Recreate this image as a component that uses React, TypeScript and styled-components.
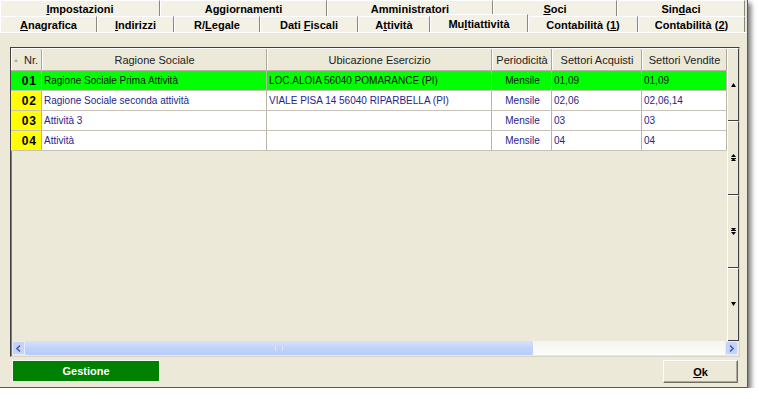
import React from 'react';
import styled, { createGlobalStyle } from 'styled-components';

const GlobalStyle = createGlobalStyle`
    html, body {
        margin: 0;
        padding: 0;
        background: #ffffff;
    }
    body {
        font-family: "Liberation Sans", Arial, sans-serif;
        font-size: 11px;
    }
`;

type Tab = { label: string; key?: number; width: number; active?: boolean };

const topTabs: Tab[] = [
    { label: 'Impostazioni', key: 0, width: 160 },
    { label: 'Aggiornamenti', width: 167 },
    { label: 'Amministratori', key: 11, width: 166 },
    { label: 'Soci', key: 0, width: 124 },
    { label: 'Sindaci', key: 3, width: 128 },
];

const bottomTabs: Tab[] = [
    { label: 'Anagrafica', key: 0, width: 97 },
    { label: 'Indirizzi', key: 0, width: 77 },
    { label: 'R/Legale', key: 2, width: 86 },
    { label: 'Dati Fiscali', key: 5, width: 98 },
    { label: 'Attività', key: 1, width: 72 },
    { label: 'Multiattività', key: 2, width: 98, active: true },
    { label: 'Contabilità (1)', key: 13, width: 110 },
    { label: 'Contabilità (2)', key: 13, width: 107 },
];

type Row = { nr: string; ragione: string; ubicazione: string; periodo: string; acquisti: string; vendite: string };

const rows: Row[] = [
    { nr: '01', ragione: 'Ragione Sociale Prima Attività', ubicazione: 'LOC.ALOIA 56040 POMARANCE (PI)', periodo: 'Mensile', acquisti: '01,09', vendite: '01,09' },
    { nr: '02', ragione: 'Ragione Sociale seconda attività', ubicazione: 'VIALE PISA 14 56040 RIPARBELLA (PI)', periodo: 'Mensile', acquisti: '02,06', vendite: '02,06,14' },
    { nr: '03', ragione: 'Attività 3', ubicazione: '', periodo: 'Mensile', acquisti: '03', vendite: '03' },
    { nr: '04', ragione: 'Attività', ubicazione: '', periodo: 'Mensile', acquisti: '04', vendite: '04' },
];

const columns = '31px 225px 225px 60px 90px 85px';

// label with the underlined access key letter
const Accel = ({ text, at }: { text: string; at?: number }) => {
    if (at === undefined) return <span>{text}</span>;
    return (
        <span>
            {text.slice(0, at)}
            <u>{text[at]}</u>
            {text.slice(at + 1)}
        </span>
    );
};

const Arrow = ({ dir, double }: { dir: 'up' | 'down'; double?: boolean }) => {
    const up = dir === 'up';
    return (
        <svg width="5" height={double ? 7 : 4} viewBox={double ? '0 0 5 7' : '0 0 5 4'}>
            {double ? (
                up ? (
                    <>
                        <polygon points="2.5,0 5,3 0,3" fill="#000" />
                        <rect x="0" y="4" width="5" height="1" fill="#000" />
                        <polygon points="2.5,4 5,7 0,7" fill="#000" />
                    </>
                ) : (
                    <>
                        <polygon points="0,0 5,0 2.5,3" fill="#000" />
                        <rect x="0" y="2" width="5" height="1" fill="#000" />
                        <polygon points="0,4 5,4 2.5,7" fill="#000" />
                    </>
                )
            ) : up ? (
                <polygon points="2.5,0 5,4 0,4" fill="#000" />
            ) : (
                <polygon points="0,0 5,0 2.5,4" fill="#000" />
            )}
        </svg>
    );
};

const Chevron = ({ left }: { left?: boolean }) => (
    <svg width="5" height="7" viewBox="0 0 5 7">
        <polyline
            points={left ? '4,0.5 1,3.5 4,6.5' : '1,0.5 4,3.5 1,6.5'}
            fill="none"
            stroke="#4d61a8"
            strokeWidth="1.6"
        />
    </svg>
);

const App = () => {
    return (
        <>
            <GlobalStyle />
            <Window>
                <TabRow>
                    {topTabs.map((t) => (
                        <TabItem key={t.label} $w={t.width}>
                            <Accel text={t.label} at={t.key} />
                        </TabItem>
                    ))}
                </TabRow>
                <TabRow>
                    {bottomTabs.map((t) => (
                        <TabItem key={t.label} $w={t.width} $active={t.active}>
                            <Accel text={t.label} at={t.key} />
                        </TabItem>
                    ))}
                </TabRow>
                <Panel>
                    <GridFrame>
                        <GridBody>
                            <Table>
                                <HeaderRow>
                                    <HeadCell $first>
                                        <SortMark>▲</SortMark>Nr.
                                    </HeadCell>
                                    <HeadCell>Ragione Sociale</HeadCell>
                                    <HeadCell>Ubicazione Esercizio</HeadCell>
                                    <HeadCell>Periodicità</HeadCell>
                                    <HeadCell>Settori Acquisti</HeadCell>
                                    <HeadCell>Settori Vendite</HeadCell>
                                </HeaderRow>
                                {rows.map((r, i) => (
                                    <DataRow key={r.nr} $selected={i === 0}>
                                        <NrCell $selected={i === 0}>{r.nr}</NrCell>
                                        <Cell>{r.ragione}</Cell>
                                        <Cell>{r.ubicazione}</Cell>
                                        <Cell $center>{r.periodo}</Cell>
                                        <Cell>{r.acquisti}</Cell>
                                        <Cell>{r.vendite}</Cell>
                                    </DataRow>
                                ))}
                            </Table>
                            <VScroll>
                                <VButton><Arrow dir="up" /></VButton>
                                <VButton><Arrow dir="up" double /></VButton>
                                <VButton><Arrow dir="down" double /></VButton>
                                <VButton><Arrow dir="down" /></VButton>
                            </VScroll>
                        </GridBody>
                        <HScroll>
                            <HArrow><Chevron left /></HArrow>
                            <HThumb>
                                <Grip />
                            </HThumb>
                            <HTrack />
                            <HArrow><Chevron /></HArrow>
                        </HScroll>
                    </GridFrame>
                    <ButtonBar>
                        <GreenButton>Gestione</GreenButton>
                        <OkButton><u>O</u>k</OkButton>
                    </ButtonBar>
                </Panel>
            </Window>
        </>
    );
};

const Window = styled.div`
    width: 748px;
    height: 388px;
    box-sizing: border-box;
    background-color: #ece9d8;
    border-right: 1px solid #5a5a5a;
    border-bottom: 1px solid #5a5a5a;
    box-shadow: 3px 3px 5px rgba(0, 0, 0, 0.55);
    display: flex;
    flex-direction: column;
`;

const TabRow = styled.div`
    display: flex;
    height: 16px;
    align-items: flex-end;
`;

const TabItem = styled.div<{ $w: number; $active?: boolean }>`
    width: ${(p) => p.$w}px;
    height: ${(p) => (p.$active ? 18 : 16)}px;
    margin-top: ${(p) => (p.$active ? -2 : 0)}px;
    margin-bottom: ${(p) => (p.$active ? 1 : 0)}px;
    box-sizing: border-box;
    background: #f3f1e6;
    border-top: 1px solid #ffffff;
    border-left: 1px solid #ffffff;
    border-right: 1px solid #8a887c;
    display: flex;
    align-items: center;
    justify-content: center;
    font-weight: bold;
    font-size: 11px;
    color: #000000;
    white-space: pre;
    padding-top: ${(p) => (p.$active ? 0 : 1)}px;
    align-self: ${(p) => (p.$active ? 'flex-start' : 'auto')};
`;

const Panel = styled.div`
    flex: 1;
    display: flex;
    flex-direction: column;
    padding: 14px 8px 0 10px;
    border-top: 1px solid #ffffff;
    background-color: #ece9d8;
`;

const GridFrame = styled.div`
    width: 730px;
    height: 310px;
    box-sizing: border-box;
    border: 1px solid #404040;
    border-right-color: #d8d5c6;
    border-bottom-color: #d8d5c6;
    box-shadow: inset 1px 1px 0 #7f7d70;
    display: flex;
    flex-direction: column;
    background: #ece9d8;
`;

const GridBody = styled.div`
    flex: 1;
    display: flex;
    min-height: 0;
`;

const Table = styled.div`
    flex: 1;
    display: flex;
    flex-direction: column;
`;

const HeaderRow = styled.div`
    display: grid;
    grid-template-columns: ${columns};
    height: 21px;
    border-top: 1px solid #ffffff;
    border-bottom: 1px solid #b8b5a6;
`;

const HeadCell = styled.div<{ $first?: boolean }>`
    display: flex;
    align-items: center;
    justify-content: ${(p) => (p.$first ? 'flex-end' : 'center')};
    padding-right: ${(p) => (p.$first ? 3 : 0)}px;
    border-right: 1px solid #aca899;
    border-left: 1px solid #ffffff;
    color: #222222;
    font-size: 11px;
    white-space: nowrap;
`;

const SortMark = styled.span`
    color: #b0ae9f;
    font-size: 6px;
    margin-right: 5px;
`;

const DataRow = styled.div<{ $selected?: boolean }>`
    display: grid;
    grid-template-columns: ${columns};
    height: 20px;
    box-sizing: border-box;
    border-bottom: 1px solid #c6c3b6;
    background: ${(p) => (p.$selected ? '#00ff00' : '#ffffff')};
    color: ${(p) => (p.$selected ? '#101010' : '#26268c')};
`;

const NrCell = styled.div<{ $selected?: boolean }>`
    background: ${(p) => (p.$selected ? '#00ff00' : '#ffff00')};
    color: #000000;
    font-weight: bold;
    font-size: 12px;
    letter-spacing: 1px;
    display: flex;
    align-items: center;
    justify-content: flex-end;
    padding-right: 4px;
    border-right: 1px solid #b8b5a6;
`;

const Cell = styled.div<{ $center?: boolean }>`
    display: flex;
    align-items: center;
    justify-content: ${(p) => (p.$center ? 'center' : 'flex-start')};
    padding-left: 2px;
    border-right: 1px solid #b8b5a6;
    font-size: 10px;
    white-space: nowrap;
    overflow: hidden;
`;

const VScroll = styled.div`
    width: 13px;
    display: flex;
    flex-direction: column;
    border-left: 1px solid #ffffff;
`;

const VButton = styled.div`
    flex: 1;
    box-sizing: border-box;
    background: #ece9d8;
    border-top: 1px solid #ffffff;
    border-right: 1px solid #404040;
    border-bottom: 1px solid #404040;
    display: flex;
    align-items: center;
    justify-content: center;
`;

const HScroll = styled.div`
    display: flex;
    height: 14px;
    margin: 0 1px 1px 1px;
`;

const HArrow = styled.div`
    width: 13px;
    box-sizing: border-box;
    background: #c5d3fa;
    border: 1px solid #e6ecfd;
    border-radius: 2px;
    display: flex;
    align-items: center;
    justify-content: center;
`;

const HThumb = styled.div`
    width: 508px;
    background: linear-gradient(#d7e2fc, #c1d2fb 50%, #b7cbf9);
    border-radius: 2px;
    display: flex;
    align-items: center;
    justify-content: center;
`;

const Grip = styled.div`
    width: 6px;
    height: 5px;
    border-left: 1px solid #e8eefd;
    border-right: 1px solid #e8eefd;
    opacity: 0.8;
`;

const HTrack = styled.div`
    flex: 1;
    background: linear-gradient(#f3f3ef, #fdfdfb);
`;

const ButtonBar = styled.div`
    display: flex;
    justify-content: space-between;
    width: 726px;
    padding: 3px 0 0 2px;
`;

const GreenButton = styled.div`
    width: 148px;
    height: 22px;
    box-sizing: border-box;
    background: #008000;
    border: 1px solid #f6f6f0;
    color: #ffffff;
    font-weight: bold;
    font-size: 11px;
    display: flex;
    align-items: center;
    justify-content: center;
`;

const OkButton = styled.div`
    width: 75px;
    height: 23px;
    box-sizing: border-box;
    background: #ece9d8;
    border: 1px solid #ffffff;
    border-right-color: #716f64;
    border-bottom-color: #716f64;
    box-shadow: inset -1px -1px 0 #aca899;
    color: #000000;
    font-weight: bold;
    font-size: 11px;
    display: flex;
    align-items: center;
    justify-content: center;
`;

export default App;
